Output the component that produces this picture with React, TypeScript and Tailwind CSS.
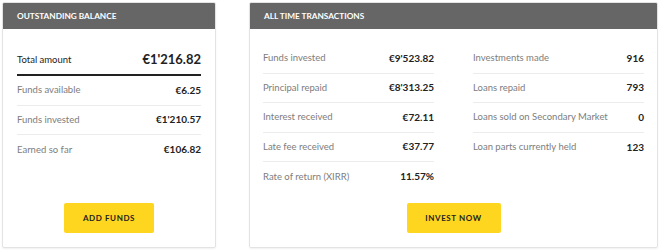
import React from "react";

const font = { fontFamily: "Lato, 'Open Sans', sans-serif" };

function Row({ label, value, last }: { label: string; value: string; last?: boolean }) {
  return (
    <div
      className={`flex items-center justify-between h-[29.5px] ${last ? "" : "border-b border-[#ececec]"}`}
    >
      <span className="text-[9.5px] text-[#7d7d7d]">{label}</span>
      <span className="text-[10px] font-bold text-[#222]">{value}</span>
    </div>
  );
}

function Header({ title }: { title: string }) {
  return (
    <div className="h-[26px] bg-[#666666] flex items-center px-[14px]">
      <span className="text-white text-[8.25px] font-bold uppercase">{title}</span>
    </div>
  );
}

function Button({ label, w }: { label: string; w: string }) {
  return (
    <div className="flex justify-center pb-[14px] mt-auto">
      <button
        className={`h-[30px] ${w} bg-[#ffd61f] rounded-[2px] text-[8px] font-bold text-[#222] tracking-[0.6px] uppercase`}
      >
        {label}
      </button>
    </div>
  );
}

export default function App() {
  return (
    <div className="w-[661px] h-[251px] bg-white pl-[2px] pt-[2px]" style={font}>
      <div className="flex gap-[33px] h-[246px]">
        <div className="w-[214px] flex flex-col border border-[#e3e3e3] rounded-[2px] shadow-[0_1px_2px_rgba(0,0,0,0.06)] overflow-hidden">
          <Header title="Outstanding Balance" />
          <div className="px-[14px] pt-[17px]">
            <div className="flex items-center justify-between h-[30px] border-b-2 border-[#222]">
              <span className="text-[9.5px] text-[#222]">Total amount</span>
              <span className="text-[13px] font-bold text-[#222]">€1'216.82</span>
            </div>
            <Row label="Funds available" value="€6.25" />
            <Row label="Funds invested" value="€1'210.57" />
            <Row label="Earned so far" value="€106.82" last />
          </div>
          <Button label="Add Funds" w="w-[90px]" />
        </div>
        <div className="w-[409px] flex flex-col border border-[#e3e3e3] rounded-[2px] shadow-[0_1px_2px_rgba(0,0,0,0.06)] overflow-hidden">
          <Header title="All Time Transactions" />
          <div className="px-[13px] pt-[15px] flex gap-[39px]">
            <div className="flex-1">
              <Row label="Funds invested" value="€9'523.82" />
              <Row label="Principal repaid" value="€8'313.25" />
              <Row label="Interest received" value="€72.11" />
              <Row label="Late fee received" value="€37.77" />
              <Row label="Rate of return (XIRR)" value="11.57%" last />
            </div>
            <div className="flex-1">
              <Row label="Investments made" value="916" />
              <Row label="Loans repaid" value="793" />
              <Row label="Loans sold on Secondary Market" value="0" />
              <Row label="Loan parts currently held" value="123" last />
            </div>
          </div>
          <Button label="Invest Now" w="w-[94px]" />
        </div>
      </div>
    </div>
  );
}
